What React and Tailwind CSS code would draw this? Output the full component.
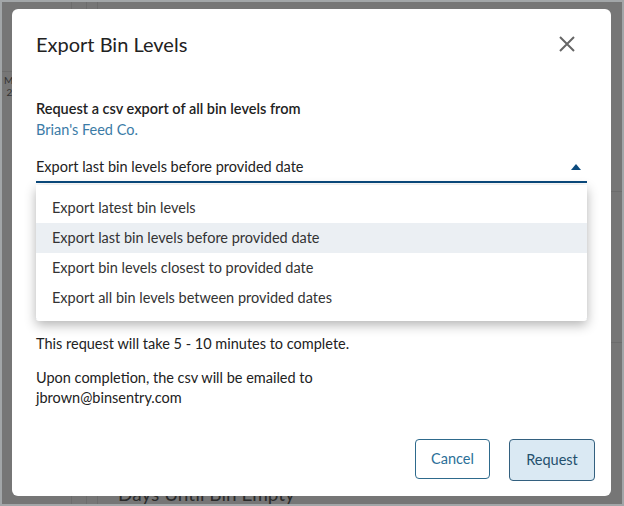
import { useState } from "react";

const OPTIONS = [
  "Export latest bin levels",
  "Export last bin levels before provided date",
  "Export bin levels closest to provided date",
  "Export all bin levels between provided dates",
];

function Backdrop() {
  // the page that sits behind the modal, dimmed
  return (
    <div className="absolute inset-0 flex text-[#2a2a2a]">
      <div className="w-[70px] border-r border-[#6c6c6c] flex flex-col">
        <div className="h-[70px] border-b border-[#6c6c6c]" />
        <div className="pl-[2px] pt-[2px] text-[10px] leading-[12px] text-[#333]">
          M
          <br />
          &nbsp;2
        </div>
      </div>
      <div className="w-[15px] border-r border-[#6c6c6c]" />
      <div className="w-[11px] border-r border-[#6c6c6c]" />
      <div className="flex-1 flex flex-col">
        <div className="flex-1" />
        <div className="pl-[20px] text-[19px] leading-[20px] text-[#2b2b2b]">
          Days Until Bin Empty
        </div>
      </div>
      <div className="w-[20px] flex flex-col pt-[155px] text-[14px] text-[#3a3a3a]">
        <div className="h-[20px] -ml-[6px]">ed</div>
        <div className="border-t border-[#6c6c6c] mt-[14px]" />
        <div className="mt-[110px] -ml-[8px] text-[13px]">ns</div>
        <div className="border-t border-[#6c6c6c] mt-[20px]" />
      </div>
    </div>
  );
}

export default function App() {
  const [selected, setSelected] = useState(1);
  const [open] = useState(true);

  return (
    <div
      className="relative w-[624px] h-[506px] overflow-hidden bg-[#767676] border-2 border-[#a2a6a8]"
      style={{ fontFamily: "Lato, 'Liberation Sans', sans-serif" }}
    >
      <Backdrop />

      {/* modal */}
      <div className="absolute left-[10px] top-[7px] w-[599px] h-[487px] bg-white rounded-[6px] flex flex-col px-[24px]">
        <div className="flex items-center justify-between pt-[20px]">
          <h2 className="text-[20px] leading-[30px] text-[#222]">Export Bin Levels</h2>
          <button className="mr-[12px] text-[#666]">
            <svg width="16" height="16" viewBox="0 0 16 16" fill="none" stroke="currentColor" strokeWidth="2">
              <path d="M1 1 L15 15 M15 1 L1 15" />
            </svg>
          </button>
        </div>

        <div className="pt-[40px]">
          <p className="text-[14.5px] leading-[20px] font-semibold text-[#222]">
            Request a csv export of all bin levels from
          </p>
          <p className="text-[14.5px] leading-[22px] text-[#3b7ba6]">Brian's Feed Co.</p>

          <div className="relative mt-[12px] w-[551px]">
            <div className="flex items-center justify-between h-[30px] border-b-2 border-[#0b4a7d]">
              <span className="text-[14.5px] text-[#222]">{OPTIONS[selected]}</span>
              <svg width="10" height="6" viewBox="0 0 10 6" className="mr-[6px]">
                <path d="M0 6 L5 0 L10 6 Z" fill="#0b4a7d" />
              </svg>
            </div>

            {/* date field hidden under the open menu */}
            <div className="h-[136px] border-b border-[#0b4a7d]" />

            {open && (
              <ul className="absolute left-0 right-0 top-[32px] bg-white py-[8px] rounded-b-[3px] shadow-[0_4px_12px_rgba(0,0,0,0.3)]">
                {OPTIONS.map((opt, i) => (
                  <li
                    key={opt}
                    onClick={() => setSelected(i)}
                    className={
                      "h-[30px] flex items-center px-[16px] text-[14.5px] text-[#333] cursor-pointer " +
                      (i === selected ? "bg-[#ebeff3]" : "")
                    }
                  >
                    {opt}
                  </li>
                ))}
              </ul>
            )}
          </div>

          <p className="mt-[15px] text-[14.5px] leading-[20px] text-[#222]">
            This request will take 5 - 10 minutes to complete.
          </p>
          <p className="mt-[14px] text-[14.5px] leading-[20px] text-[#222]">
            Upon completion, the csv will be emailed to
            <br />
            jbrown@binsentry.com
          </p>
        </div>

        <div className="flex-1" />

        <div className="flex justify-end gap-[19px] pb-[15px] -mr-[8px]">
          <button className="w-[75px] h-[40px] rounded-[4px] border border-[#2e6a8c] text-[14.5px] text-[#2b6f98] bg-white">
            Cancel
          </button>
          <button className="w-[86px] h-[42px] rounded-[4px] border border-[#33607f] text-[14.5px] text-[#24506d] bg-[#dae9f3]">
            Request
          </button>
        </div>
      </div>
    </div>
  );
}
